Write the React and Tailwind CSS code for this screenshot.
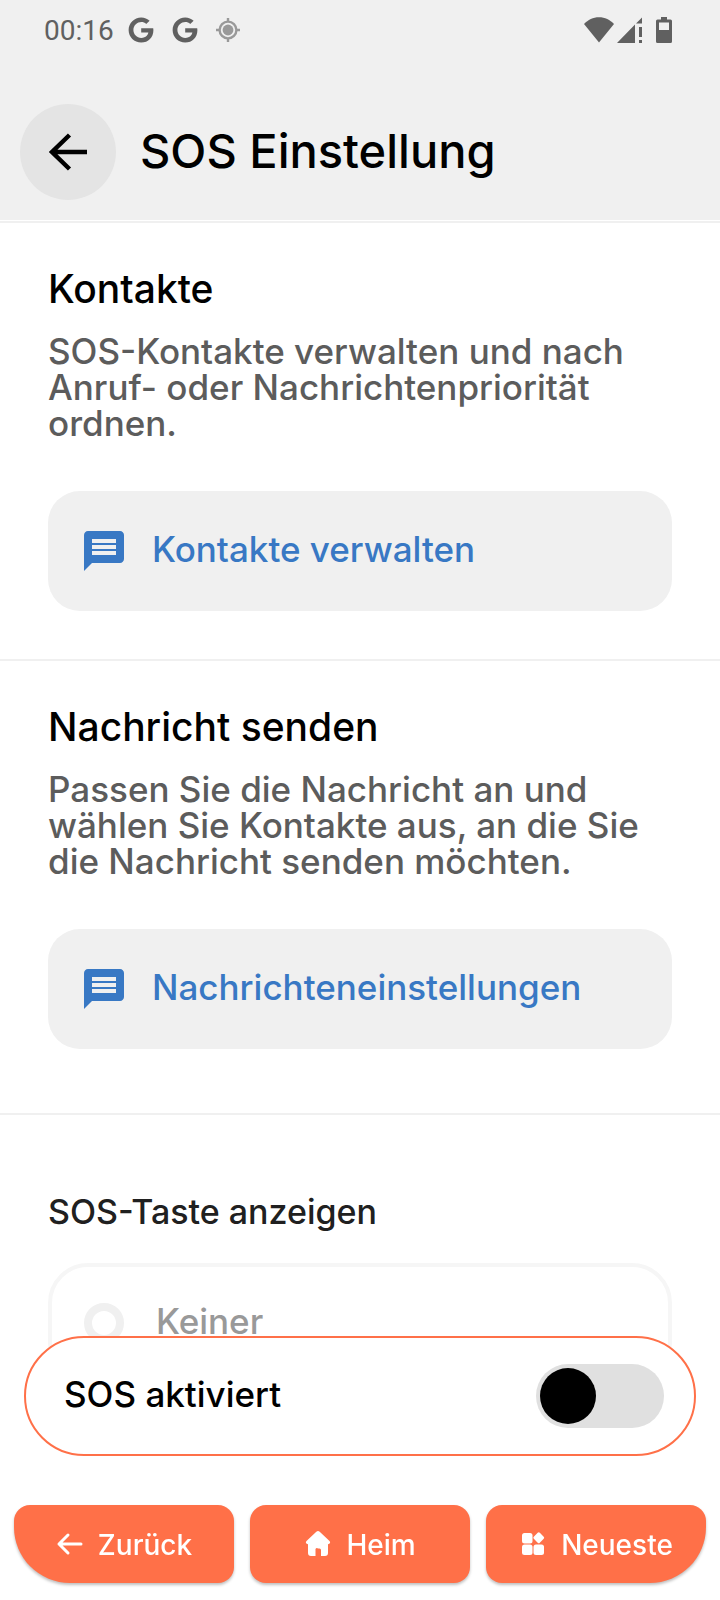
import React, { useState } from 'react';
import { MdMessage } from 'react-icons/md';
import { FaGoogle } from 'react-icons/fa';

const acciones = [
  {
    title: 'Kontakte',
    desc: 'SOS-Kontakte verwalten und nach Anruf- oder Nachrichtenpriorität ordnen.',
    button: 'Kontakte verwalten',
    style: 'pb-12',
  },
  {
    title: 'Nachricht senden',
    desc: 'Passen Sie die Nachricht an und wählen Sie Kontakte aus, an die Sie die Nachricht senden möchten.',
    button: 'Nachrichteneinstellungen',
    style: 'pb-16',
  },
];

function StatusBar() {
  return (
    <div className="flex h-15 items-center justify-between pr-12 pl-11 text-[#606060]">
      <div className="flex items-center">
        <span className="pt-0.5 font-[Roboto,sans-serif] text-[28px] leading-none">00:16</span>
        <FaGoogle className="ml-[14px] size-[26px]" />
        <FaGoogle className="ml-[18px] size-[26px]" />
        <svg className="ml-[18px] size-6 text-[#999999]" viewBox="0 0 24 24" fill="none" stroke="currentColor" strokeWidth="2.4">
          <circle cx="12" cy="12" r="8.4" />
          <circle cx="12" cy="12" r="5.4" fill="currentColor" stroke="none" />
          <path d="M12 0v4M12 20v4M0 12h4M20 12h4" />
        </svg>
      </div>
      <div className="flex items-center">
        <svg className="h-[26px] w-[30px]" viewBox="0 0 30 26" fill="currentColor">
          <path d="M15 25.5 0 7C4 2.800 9 .3 15 .3S26 2.800 30 7z" />
        </svg>
        <svg className="ml-[3px] h-[26px] w-[25px]" viewBox="0 0 25 26" fill="currentColor">
          <path d="M0 26 18 7.500V26zM19 6.500 25 .5V6.500zM22 10h3v10h-3zM22 23h3v3h-3z" />
        </svg>
        <svg className="ml-[14px] h-[26px] w-4" viewBox="0 0 16 26" fill="currentColor">
          <path fillRule="evenodd" d="M5 0h6v2.500h3.500A1.500 1.500 0 0 1 16 4v20.500a1.500 1.500 0 0 1-1.500 1.500h-13A1.500 1.500 0 0 1 0 24.500V4a1.500 1.500 0 0 1 1.500-1.500H5zM3 5.500V13h10V5.500z" />
        </svg>
      </div>
    </div>
  );
}

function ActionSection({ title, desc, button, style }) {
  return (
    <section className={`border-b-2 border-[#f0f0f0] px-12 pt-[42px] ${style}`}>
      <h2 className="text-[39px] leading-12 font-medium">{title}</h2>
      <p className="mt-5 text-[35px] leading-9 font-medium text-[#5c5c5c]">{desc}</p>
      <button className="mt-[50px] flex h-30 w-full items-center gap-6 rounded-4xl bg-[#f0f0f0] px-8 text-[35px] font-medium text-[#3878c4]">
        <MdMessage className="size-12" />
        <span className="pb-1">{button}</span>
      </button>
    </section>
  );
}

export default function App() {
  const [activo, setActivo] = useState(false);
  const [opcion, setOpcion] = useState('');

  return (
    <div className="min-h-screen bg-white font-[Inter,sans-serif] text-black">
      <header className="bg-[#f0f0f0]">
        <StatusBar />
        <div className="flex items-center gap-6 px-5 pt-11 pb-5">
          <button aria-label="Zurück" className="flex size-24 items-center justify-center rounded-full bg-[#e4e4e4]">
            <svg className="size-10" viewBox="0 0 40 40" fill="none" stroke="currentColor" strokeWidth="4.5">
              <path d="M39 20H4M21.500 3 4 20l17.500 17" />
            </svg>
          </button>
          <h1 className="pb-1 text-[47px] leading-none font-medium">SOS Einstellung</h1>
        </div>
      </header>

      <main className="mt-px border-t-2 border-[#f0f0f0]">
        {acciones.map((item) => (
          <ActionSection key={item.title} {...item} />
        ))}

        <section className="px-12 pt-[73px]">
          <h2 className="text-[34px] leading-12 font-medium text-[#202020]">SOS-Taste anzeigen</h2>
          <label className="mt-[27px] flex h-30 items-center gap-8 rounded-[40px] border-4 border-[#f6f6f6] px-8 text-[35px] font-medium text-[#999999]">
            <input
              type="radio"
              name="sos-taste"
              checked={opcion === 'keiner'}
              onChange={() => setOpcion('keiner')}
              className="size-10 appearance-none rounded-full border-8 border-[#f0f0f0] checked:bg-[#ff7048]"
            />
            <span className="pb-1">Keiner</span>
          </label>
        </section>
      </main>

      <footer className="fixed inset-x-0 bottom-0">
        <label className="mx-6 flex h-30 items-center justify-between rounded-full border-2 border-[#ff7048] bg-white pr-[30px] pl-[38px] text-[35px] font-medium">
          <span className="pb-1">SOS aktiviert</span>
          <input
            type="checkbox"
            role="switch"
            checked={activo}
            onChange={(e) => setActivo(e.target.checked)}
            className="h-16 w-32 appearance-none rounded-full bg-[#e0e0e0] p-1 before:block before:size-14 before:rounded-full before:bg-black checked:before:ml-auto"
          />
        </label>

        <nav className="mt-[49px] flex gap-4 px-[14px] pb-[17px] text-[28px] font-medium text-white">
          <button className="flex h-[78px] flex-1 items-center justify-center gap-[14px] rounded-2xl rounded-bl-[56px] bg-[#ff7048] shadow-[0_2px_3px_rgba(0,0,0,0.25)]">
            <svg className="size-7" viewBox="0 0 28 28" fill="none" stroke="currentColor" strokeWidth="3" strokeLinecap="round" strokeLinejoin="round">
              <path d="M25 14H3M12 5 3 14l9 9" />
            </svg>
            <span className="pt-0.5">Zurück</span>
          </button>
          <button className="flex h-[78px] flex-1 items-center justify-center gap-[14px] rounded-2xl bg-[#ff7048] shadow-[0_2px_3px_rgba(0,0,0,0.25)]">
            <svg className="size-7" viewBox="0 0 28 28" fill="currentColor">
              <path d="M12.300 1.700a2.500 2.500 0 0 1 3.400 0l9.800 9.300c1.300 1.300.5 3-1.500 3.200V23a3 3 0 0 1-3 3h-4v-6a1.500 1.500 0 0 0-1.500-1.500h-1.500A1.500 1.500 0 0 0 11.500 20v6H7a3 3 0 0 1-3-3v-8.800c-2-.2-2.800-1.900-1.500-3.200z" />
            </svg>
            <span className="pt-0.5">Heim</span>
          </button>
          <button className="flex h-[78px] flex-1 items-center justify-center gap-[14px] rounded-2xl rounded-br-[56px] bg-[#ff7048] shadow-[0_2px_3px_rgba(0,0,0,0.25)]">
            <svg className="size-7" viewBox="0 0 28 28" fill="currentColor">
              <rect x="3" y="3" width="10.500" height="10.500" rx="2.500" />
              <rect x="3" y="14.500" width="10.500" height="10.500" rx="2.500" />
              <rect x="14.500" y="14.500" width="10.500" height="10.500" rx="2.500" />
              <rect x="15.500" y="3.500" width="8.500" height="8.500" rx="1.500" transform="rotate(45 19.75 7.75)" />
            </svg>
            <span className="pt-0.5">Neueste</span>
          </button>
        </nav>
      </footer>
    </div>
  );
}
